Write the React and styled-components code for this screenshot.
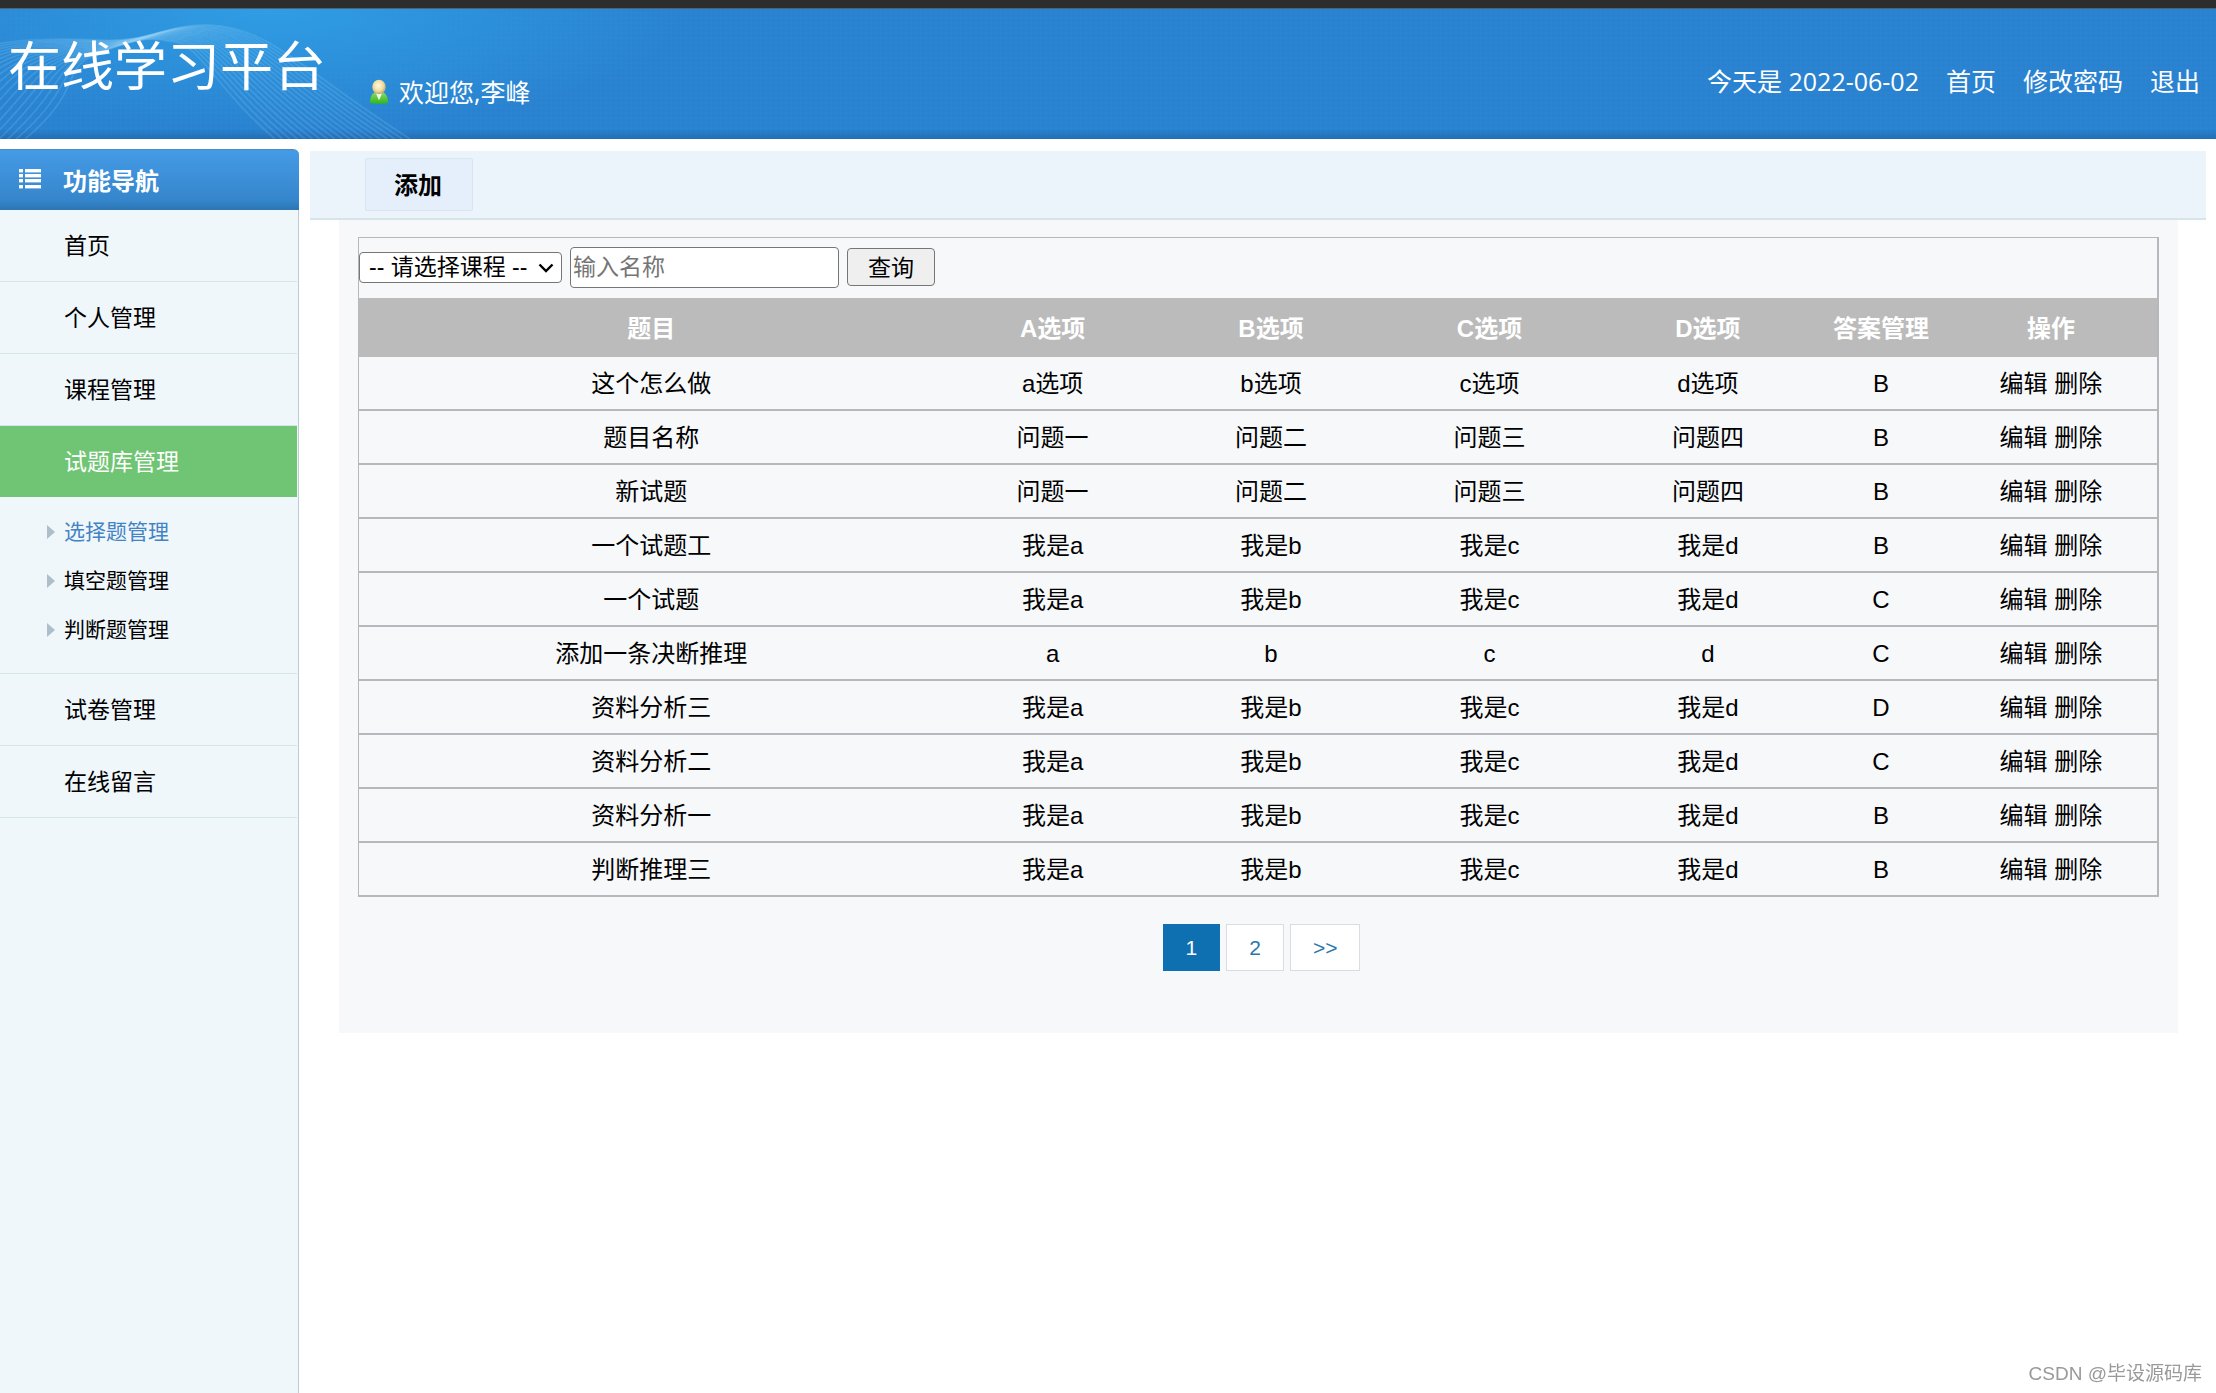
import React from "react";
import styled, { createGlobalStyle } from "styled-components";

const uiFont = `"Open Sans", "Noto Sans CJK SC", sans-serif`;
const tableFont = `"Liberation Sans", "Noto Sans CJK SC", sans-serif`;

const menus = [
  { name: "首页" },
  { name: "个人管理" },
  { name: "课程管理" },
  {
    name: "试题库管理",
    active: true,
    children: [
      { name: "选择题管理", active: true },
      { name: "填空题管理" },
      { name: "判断题管理" },
    ],
  },
  { name: "试卷管理" },
  { name: "在线留言" },
];

const columns = [
  { title: "题目", width: "32.5%" },
  { title: "A选项", width: "12.15%" },
  { title: "B选项", width: "12.15%" },
  { title: "C选项", width: "12.15%" },
  { title: "D选项", width: "12.15%" },
  { title: "答案管理", width: "7.1%" },
  { title: "操作", width: "11.8%" },
];

const questions = [
  ["这个怎么做", "a选项", "b选项", "c选项", "d选项", "B"],
  ["题目名称", "问题一", "问题二", "问题三", "问题四", "B"],
  ["新试题", "问题一", "问题二", "问题三", "问题四", "B"],
  ["一个试题工", "我是a", "我是b", "我是c", "我是d", "B"],
  ["一个试题", "我是a", "我是b", "我是c", "我是d", "C"],
  ["添加一条决断推理", "a", "b", "c", "d", "C"],
  ["资料分析三", "我是a", "我是b", "我是c", "我是d", "D"],
  ["资料分析二", "我是a", "我是b", "我是c", "我是d", "C"],
  ["资料分析一", "我是a", "我是b", "我是c", "我是d", "B"],
  ["判断推理三", "我是a", "我是b", "我是c", "我是d", "B"],
];

// header background lines
const waves = Array.from({ length: 19 }, (_, i) => {
  const t = i / 18;
  const left = -130 + 155 * t;
  const right = 410 - 135 * t;
  return `M${left} 130 C${left + 60} ${40 + 40 * t} ${-20 + 80 * t} ${
    26 + 34 * t
  } ${100 - 4 * t} ${31 + 14 * t} C${150 - 20 * t} ${34 - 2 * t} ${165 - 20 * t} ${
    15 + 12 * t
  } ${208 - 40 * t} ${16 + 16 * t} C${270 - 70 * t} ${18 + 14 * t} ${300 - 90 * t} ${
    60 + 14 * t
  } ${right} 130`;
});

const Waves = () => (
  <WaveSvg width="430" height="130" viewBox="0 0 430 130" aria-hidden="true">
    {waves.map((d) => (
      <path key={d} d={d} fill="none" stroke="#9fd6fb" strokeOpacity="0.18" strokeWidth="1.8" />
    ))}
  </WaveSvg>
);

const UserIcon = () => (
  <svg width="20" height="26" viewBox="0 0 22 28" aria-hidden="true">
    <defs>
      <radialGradient id="head" cx="0.45" cy="0.4" r="0.6">
        <stop offset="0" stopColor="#fffbe6" />
        <stop offset="0.6" stopColor="#f3dd9f" />
        <stop offset="1" stopColor="#b9a877" />
      </radialGradient>
      <linearGradient id="body" x1="0" y1="0" x2="0" y2="1">
        <stop offset="0" stopColor="#8ddc62" />
        <stop offset="1" stopColor="#2fb51d" />
      </linearGradient>
    </defs>
    <path d="M1 26 C1 19 4 15 7 14 H15 C18 15 21 19 21 26 Q11 28 1 26 Z" fill="url(#body)" />
    <path d="M7 14 H15 L11 23 Z" fill="#f4fff0" />
    <ellipse cx="11" cy="8.5" rx="7.4" ry="8" fill="url(#head)" />
  </svg>
);

const ListIcon = () => (
  <svg width="22" height="20" viewBox="0 0 22 20" fill="#fff" aria-hidden="true">
    {[0, 5, 10, 16].map((y) => (
      <React.Fragment key={y}>
        <rect x="0" y={y} width="4" height="3.4" />
        <rect x="6" y={y} width="16" height="3.4" />
      </React.Fragment>
    ))}
  </svg>
);

const Chevron = () => (
  <svg width="16" height="10" viewBox="0 0 16 10" aria-hidden="true">
    <path d="M1.5 1.5 L8 8 L14.5 1.5" fill="none" stroke="#000" strokeWidth="2.4" />
  </svg>
);

const App = () => {
  return (
    <Page>
      <GlobalStyle />
      <Header>
        <Waves />
        <Title>在线学习平台</Title>
        <Welcome>
          <UserIcon />
          欢迎您,李峰
        </Welcome>
        <HeaderNav>
          <span>今天是 2022-06-02</span>
          <a href="#home">首页</a>
          <a href="#password">修改密码</a>
          <a href="#logout">退出</a>
        </HeaderNav>
      </Header>
      <Body>
        <Sidebar>
          <SidebarTitle>
            <ListIcon />
            功能导航
          </SidebarTitle>
          <nav>
            {menus.map((menu) => (
              <MenuGroup key={menu.name}>
                <MenuLink href="#menu" $active={menu.active}>
                  {menu.name}
                </MenuLink>
                {menu.children && (
                  <SubMenu>
                    {menu.children.map((child) => (
                      <SubLink href="#sub" key={child.name} $active={child.active}>
                        {child.name}
                      </SubLink>
                    ))}
                  </SubMenu>
                )}
              </MenuGroup>
            ))}
          </nav>
        </Sidebar>
        <Main>
          <TabBar>
            <AddButton type="button">添加</AddButton>
          </TabBar>
          <Panel>
            <TableFrame>
              <Filter onSubmit={(e) => e.preventDefault()}>
                <SelectBox>
                  <CourseSelect aria-label="课程">
                    <option>-- 请选择课程 --</option>
                  </CourseSelect>
                  <Chevron />
                </SelectBox>
                <NameInput aria-label="名称" placeholder="输入名称" />
                <SearchButton type="submit">查询</SearchButton>
              </Filter>
              <Table>
                <colgroup>
                  {columns.map((col) => (
                    <col key={col.title} width={col.width} />
                  ))}
                </colgroup>
                <thead>
                  <tr>
                    {columns.map((col) => (
                      <Th key={col.title}>{col.title}</Th>
                    ))}
                  </tr>
                </thead>
                <tbody>
                  {questions.map((row, i) => (
                    <tr key={i}>
                      {row.map((text, j) => (
                        <Td key={j}>{text}</Td>
                      ))}
                      <Td>
                        <a href="#edit">编辑</a> <a href="#delete">删除</a>
                      </Td>
                    </tr>
                  ))}
                </tbody>
              </Table>
            </TableFrame>
            <Pagination>
              <PageLink href="#1" $active>
                1
              </PageLink>
              <PageLink href="#2">2</PageLink>
              <PageLink href="#next">&gt;&gt;</PageLink>
            </Pagination>
          </Panel>
        </Main>
      </Body>
      <Watermark>CSDN @毕设源码库</Watermark>
    </Page>
  );
};

const GlobalStyle = createGlobalStyle`
  * {
    box-sizing: border-box;
  }
  body {
    margin: 0;
    background: #fff;
    color: #000;
    font-family: ${uiFont};
  }
  a {
    color: inherit;
    text-decoration: none;
  }
`;

const Page = styled.div`
  display: flex;
  flex-direction: column;
  min-height: 100vh;
  border-top: 8px solid #2d2d2d;
`;

const Header = styled.header`
  position: relative;
  display: flex;
  align-items: flex-start;
  height: 131px;
  padding: 0 16px 0 8px;
  color: #fff;
  border-top: 1px solid #4c6375;
  background:
    linear-gradient(to bottom, transparent 120px, rgba(20, 80, 140, 0.4) 130px),
    radial-gradient(ellipse 420px 120px at 270px 0, #2f9de4, rgba(47, 157, 228, 0)),
    repeating-linear-gradient(0deg, rgba(255, 255, 255, 0.01) 0 2px, transparent 2px 5px),
    repeating-linear-gradient(90deg, rgba(255, 255, 255, 0.01) 0 2px, transparent 2px 5px),
    #2882d0;
`;

const WaveSvg = styled.svg`
  position: absolute;
  left: 0;
  top: 0;
`;

const Title = styled.h1`
  position: relative;
  margin: 24px 43px 0 0;
  font-size: 53px;
  font-weight: 400;
  line-height: 66px;
`;

const Welcome = styled.div`
  position: relative;
  display: flex;
  align-items: center;
  gap: 10px;
  margin-top: 66px;
  font-size: 25px;
  line-height: 34px;
`;

const HeaderNav = styled.nav`
  display: flex;
  gap: 27px;
  margin: 55px 0 0 auto;
  font-size: 25px;
  line-height: 34px;
`;

const Body = styled.div`
  display: flex;
  flex: 1;
  gap: 11px;
  padding: 10px 10px 0 0;
`;

const Sidebar = styled.aside`
  width: 299px;
  flex-shrink: 0;
  border-right: 1px solid #b9cdd9;
  border-top-right-radius: 6px;
  background: #eff7fb;
`;

const SidebarTitle = styled.div`
  display: flex;
  align-items: center;
  gap: 22px;
  height: 61px;
  margin-right: -1px;
  padding: 0 0 2px 19px;
  border-top: 1px solid #4d8cc2;
  border-top-right-radius: 6px;
  color: #fff;
  font-size: 24px;
  font-weight: 700;
  background: linear-gradient(#459be6, #3585cb 85%, #2b75b2);
`;

const MenuGroup = styled.div`
  margin-right: 1px;
  border-bottom: 1px solid #d6e5ec;
`;

const MenuLink = styled.a`
  display: block;
  padding-left: 64px;
  font-size: 23px;
  line-height: 71px;
  color: ${(props) => (props.$active ? "#fff" : "#000")};
  background: ${(props) => (props.$active ? "#6fc573" : "transparent")};
`;

const SubMenu = styled.div`
  padding: 10px 0 19px;
`;

const SubLink = styled.a`
  display: flex;
  align-items: center;
  padding-left: 47px;
  font-size: 21px;
  line-height: 49px;
  color: ${(props) => (props.$active ? "#4283c4" : "#000")};
  &::before {
    content: "";
    margin-right: 9px;
    border: 7px solid transparent;
    border-left: 8px solid #aebfc9;
    border-right: 0;
  }
`;

const Main = styled.main`
  flex: 1;
  min-width: 0;
`;

const TabBar = styled.div`
  margin-top: 2px;
  padding: 7px 0 7px 55px;
  border-bottom: 2px solid #d7e5ea;
  background: #ebf4fb;
`;

const AddButton = styled.button`
  display: block;
  height: 53px;
  padding: 0 30px 3px 28px;
  border: 1px solid #dbe5f2;
  border-radius: 2px;
  background: #e5effb;
  color: #000;
  font-family: ${uiFont};
  font-size: 24px;
  font-weight: 700;
`;

const Panel = styled.section`
  margin: 0 28px 0 29px;
  padding: 17px 19px 62px;
  background: #f6f8fa;
  font-family: ${tableFont};
`;

const TableFrame = styled.div`
  border: 1px solid #b5b9bd;
  border-right-width: 2px;
  border-bottom: 0;
`;

const Filter = styled.form`
  display: flex;
  align-items: center;
  gap: 8px;
  height: 60px;
  padding-bottom: 2px;
`;

const SelectBox = styled.div`
  position: relative;
  svg {
    position: absolute;
    right: 8px;
    top: 11px;
    pointer-events: none;
  }
`;

const CourseSelect = styled.select`
  display: block;
  width: 203px;
  height: 31px;
  padding: 0 32px 0 9px;
  border: 1px solid #767676;
  border-radius: 4px;
  appearance: none;
  background-color: #fff;
  color: #000;
  font-family: ${tableFont};
  font-size: 23px;
`;

const NameInput = styled.input`
  width: 269px;
  height: 41px;
  padding: 0 2px;
  border: 1px solid #767676;
  border-radius: 4px;
  font-family: ${tableFont};
  font-size: 23px;
  &::placeholder {
    color: #757575;
  }
`;

const SearchButton = styled.button`
  width: 88px;
  height: 38px;
  padding: 0 0 2px;
  border: 1px solid #767676;
  border-radius: 4px;
  background: #efefef;
  color: #000;
  font-family: ${tableFont};
  font-size: 23px;
`;

const Table = styled.table`
  width: 100%;
  table-layout: fixed;
  border-collapse: separate;
  border-spacing: 0;
  font-size: 24px;
  line-height: 32px;
  text-align: center;
`;

const Th = styled.th`
  height: 59px;
  padding: 3px 0 0;
  background: #bbb;
  color: #fff;
  font-weight: 700;
`;

const Td = styled.td`
  height: 54px;
  padding: 2px 0 0;
  border-bottom: 2px solid #b5b9bd;
`;

const Pagination = styled.div`
  display: flex;
  justify-content: center;
  gap: 6px;
  margin-top: 27px;
  padding-left: 6px;
`;

const PageLink = styled.a`
  height: 47px;
  padding: 0 22px;
  border: 1px solid ${(props) => (props.$active ? "#0e70b0" : "#d9dce0")};
  background: ${(props) => (props.$active ? "#0e70b0" : "#fff")};
  color: ${(props) => (props.$active ? "#fff" : "#2a76ab")};
  font-size: 21px;
  line-height: 45px;
`;

const Watermark = styled.div`
  position: fixed;
  right: 14px;
  bottom: 4px;
  color: #999;
  font-family: ${tableFont};
  font-size: 19px;
  line-height: 30px;
`;

export default App;
